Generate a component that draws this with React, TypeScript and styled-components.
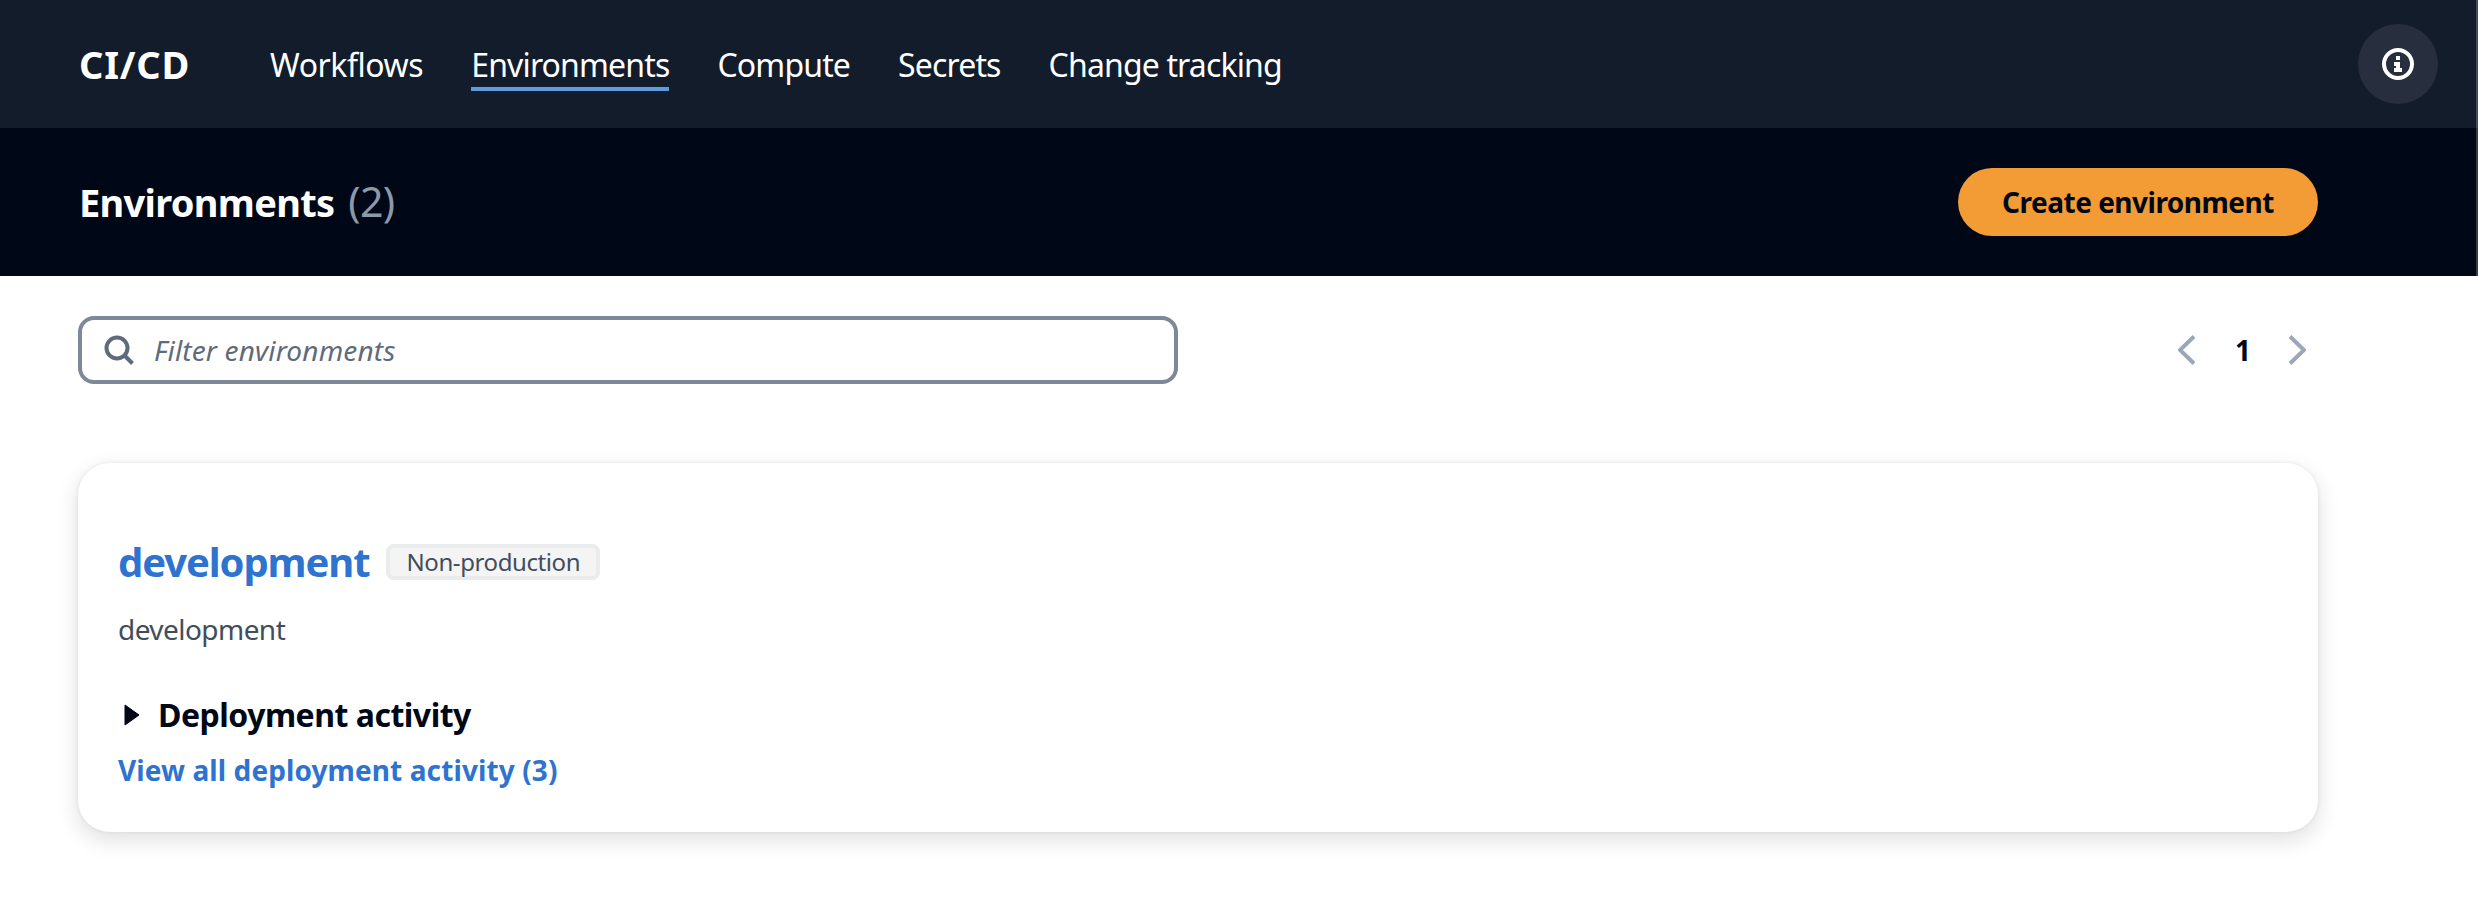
import React from 'react';
import styled, { createGlobalStyle } from 'styled-components';

const GlobalStyle = createGlobalStyle`
    html, body {
        margin: 0;
        padding: 0;
        background: #ffffff;
    }
    body {
        font-family: "Noto Sans", "Open Sans", sans-serif;
        color: #000716;
    }
    * {
        box-sizing: border-box;
    }
`;

const TopNav = styled.nav`
    height: 128px;
    background: #131c2b;
    box-shadow: inset -2px 0 0 #454b59;
    display: flex;
    align-items: center;
    padding: 0 40px 0 79px;
`;

const Brand = styled.div`
    color: #ffffff;
    font-size: 38px;
    font-weight: 700;
    letter-spacing: 0.8px;
    width: 111px;
    margin-right: 80px;
    white-space: nowrap;
`;

const NavLinks = styled.div`
    display: flex;
    gap: 48px;
    flex: 1;
`;

const NavLink = styled.a<{ $active?: boolean }>`
    color: #ffffff;
    font-size: 32px;
    line-height: 44px;
    letter-spacing: -0.85px;
    padding: 6px 0 0;
    white-space: nowrap;
    border-bottom: 4px solid ${(p) => (p.$active ? '#5c9bdf' : 'transparent')};

    &:first-child {
        letter-spacing: -0.45px;
    }
`;

const InfoButton = styled.button`
    width: 80px;
    height: 80px;
    border: none;
    border-radius: 50%;
    background: #272f3e;
    display: flex;
    align-items: center;
    justify-content: center;
    padding: 0;
`;

const PageHeader = styled.header`
    height: 148px;
    background: #000716;
    box-shadow: inset -2px 0 0 #383c49;
    display: flex;
    align-items: center;
    justify-content: space-between;
    padding: 0 160px 0 79px;
`;

const Title = styled.h1`
    margin: 0 0 2px;
    color: #ffffff;
    font-size: 38px;
    font-weight: 700;
    letter-spacing: -0.7px;
    white-space: nowrap;
`;

const Count = styled.span`
    color: #8d99a8;
    font-size: 41px;
    font-weight: 400;
    margin-left: 4px;
`;

const PrimaryButton = styled.button`
    width: 360px;
    height: 68px;
    border: none;
    border-radius: 34px;
    background: #f39b35;
    color: #000716;
    font-family: inherit;
    font-size: 28px;
    font-weight: 700;
    letter-spacing: -0.5px;
    padding: 0;
`;

const Content = styled.main`
    min-height: 628px;
    padding: 40px 160px 0 78px;
`;

const FilterRow = styled.div`
    display: flex;
    align-items: center;
    justify-content: space-between;
`;

const SearchBox = styled.div`
    width: 1100px;
    height: 68px;
    border: 4px solid #7d8998;
    border-radius: 16px;
    display: flex;
    align-items: center;
    gap: 20px;
    padding-left: 22px;
`;

const Placeholder = styled.span`
    color: #5f6b7a;
    font-size: 28px;
    font-style: italic;
    letter-spacing: 0.15px;
`;

const Pagination = styled.div`
    display: flex;
    align-items: center;
    gap: 39px;
    padding-right: 12px;
`;

const PageNumber = styled.span`
    font-size: 28px;
    font-weight: 700;
    width: 14px;
    text-align: center;
`;

const Card = styled.section`
    margin-top: 79px;
    height: 369px;
    border-radius: 32px;
    background: #ffffff;
    box-shadow: 0 0 4px rgba(0, 7, 22, 0.08), 0 8px 20px 3px rgba(0, 7, 22, 0.1);
    padding: 76px 40px 0;
`;

const CardHeading = styled.div`
    display: flex;
    align-items: center;
    gap: 17px;
    height: 44px;
`;

const CardTitle = styled.a`
    color: #2e73d0;
    font-size: 40px;
    font-weight: 700;
    letter-spacing: -1.1px;
`;

const Badge = styled.span`
    height: 36px;
    margin-top: 2px;
    border: 4px solid #e9ebed;
    border-radius: 8px;
    background: #f4f4f4;
    color: #414d5c;
    font-size: 24px;
    line-height: 28px;
    letter-spacing: -0.4px;
    padding: 0 16px;
`;

const Description = styled.p`
    margin: 26px 0 0;
    color: #414d5c;
    font-size: 28px;
    line-height: 40px;
    letter-spacing: -0.55px;
`;

const Expander = styled.div`
    display: flex;
    align-items: center;
    gap: 18px;
    margin-top: 44px;
    padding-left: 6px;
    font-size: 32px;
    line-height: 44px;
    font-weight: 700;
    letter-spacing: -0.5px;
`;

const ActivityLink = styled.a`
    display: block;
    margin-top: 13px;
    color: #2e73d0;
    font-size: 28px;
    line-height: 40px;
    font-weight: 700;
    letter-spacing: 0.1px;
`;

const InfoIcon = () => (
    <svg width="32" height="32" viewBox="0 0 32 32" fill="none">
        <circle cx="16" cy="16" r="14" stroke="#ffffff" strokeWidth="4" />
        <rect x="14" y="8" width="4" height="4" fill="#ffffff" />
        <path d="M12 14h6v6h2v4h-8v-4h2v-2h-2z" fill="#ffffff" />
    </svg>
);

const SearchIcon = () => (
    <svg width="30" height="30" viewBox="0 0 30 30" fill="none" stroke="#5f6b7a" strokeWidth="4">
        <circle cx="13" cy="13" r="10.5" />
        <path d="M20 20l8.5 8.5" />
    </svg>
);

const Chevron = ({ flip }: { flip?: boolean }) => (
    <svg width="18" height="30" viewBox="0 0 18 30" fill="none" stroke="#9ba7b6" strokeWidth="4">
        <path d={flip ? 'M2 1.5L16 15 2 28.5' : 'M16 1.5L2 15l14 13.5'} />
    </svg>
);

const Caret = () => (
    <svg width="16" height="22" viewBox="0 0 16 22">
        <path d="M1 1l14 10L1 21z" fill="#000716" stroke="#000716" strokeLinejoin="round" />
    </svg>
);

const navItems = ['Workflows', 'Environments', 'Compute', 'Secrets', 'Change tracking'];

const App: React.FC = () => {
    return (
        <>
            <GlobalStyle />
            <TopNav>
                <Brand>CI/CD</Brand>
                <NavLinks>
                    {navItems.map((item) => (
                        <NavLink key={item} $active={item === 'Environments'}>{item}</NavLink>
                    ))}
                </NavLinks>
                <InfoButton aria-label="Info"><InfoIcon /></InfoButton>
            </TopNav>
            <PageHeader>
                <Title>Environments<Count> (2)</Count></Title>
                <PrimaryButton>Create environment</PrimaryButton>
            </PageHeader>
            <Content>
                <FilterRow>
                    <SearchBox>
                        <SearchIcon />
                        <Placeholder>Filter environments</Placeholder>
                    </SearchBox>
                    <Pagination>
                        <Chevron />
                        <PageNumber>1</PageNumber>
                        <Chevron flip />
                    </Pagination>
                </FilterRow>
                <Card>
                    <CardHeading>
                        <CardTitle>development</CardTitle>
                        <Badge>Non-production</Badge>
                    </CardHeading>
                    <Description>development</Description>
                    <Expander>
                        <Caret />
                        Deployment activity
                    </Expander>
                    <ActivityLink>View all deployment activity (3)</ActivityLink>
                </Card>
            </Content>
        </>
    );
};

export default App;
